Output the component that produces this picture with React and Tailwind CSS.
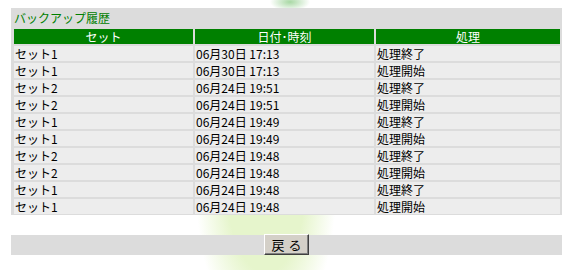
import React from "react";

const rows = [
  ["セット1", "06月30日 17:13", "処理終了"],
  ["セット1", "06月30日 17:13", "処理開始"],
  ["セット2", "06月24日 19:51", "処理終了"],
  ["セット2", "06月24日 19:51", "処理開始"],
  ["セット1", "06月24日 19:49", "処理終了"],
  ["セット1", "06月24日 19:49", "処理開始"],
  ["セット2", "06月24日 19:48", "処理終了"],
  ["セット2", "06月24日 19:48", "処理開始"],
  ["セット1", "06月24日 19:48", "処理終了"],
  ["セット1", "06月24日 19:48", "処理開始"],
];

export default function App() {
  return (
    <div className="w-[571px] h-[270px] overflow-hidden bg-white bg-[radial-gradient(ellipse_20px_9px_at_290px_2px,#a8d8a4,transparent),radial-gradient(ellipse_70px_150px_at_266px_190px,#e6f5cc_55%,transparent)] pt-[8px] pl-[11px] font-['Noto_Sans_CJK_JP','Noto_Sans_CJK_SC',sans-serif] text-[12px] leading-[15px] text-black">
      <div className="w-[551px] bg-[#dcdcdc] pb-[1px]">
        <div className="h-[21px] pl-[3px] pt-[2px] text-[#008000]">バックアップ履歴</div>
        <div className="grid grid-cols-[179px_179px_184px] gap-[2px] pl-[3px]">
          {["セット", "日付･時刻", "処理"].map((h) => (
            <div key={h} className="h-[15px] bg-[#008000] text-center text-white">
              {h}
            </div>
          ))}
          {rows.map((r, i) =>
            r.map((c, j) => (
              <div key={`${i}-${j}`} className="h-[15px] bg-[#ededed] pl-[1px] whitespace-nowrap">
                {c}
              </div>
            ))
          )}
        </div>
      </div>

      <div className="mt-[20px] w-[551px] h-[20px] bg-[#dcdcdc] flex justify-center">
        <button
          type="button"
          className="-mt-[1px] w-[45px] h-[21px] bg-[#d4d0c8] border border-t-white border-l-white border-r-[#404040] border-b-[#404040] shadow-[inset_-1px_-1px_0_#808080] text-[13px] leading-[17px] tracking-[4px] pl-[4px]"
        >
          戻る
        </button>
      </div>
    </div>
  );
}
